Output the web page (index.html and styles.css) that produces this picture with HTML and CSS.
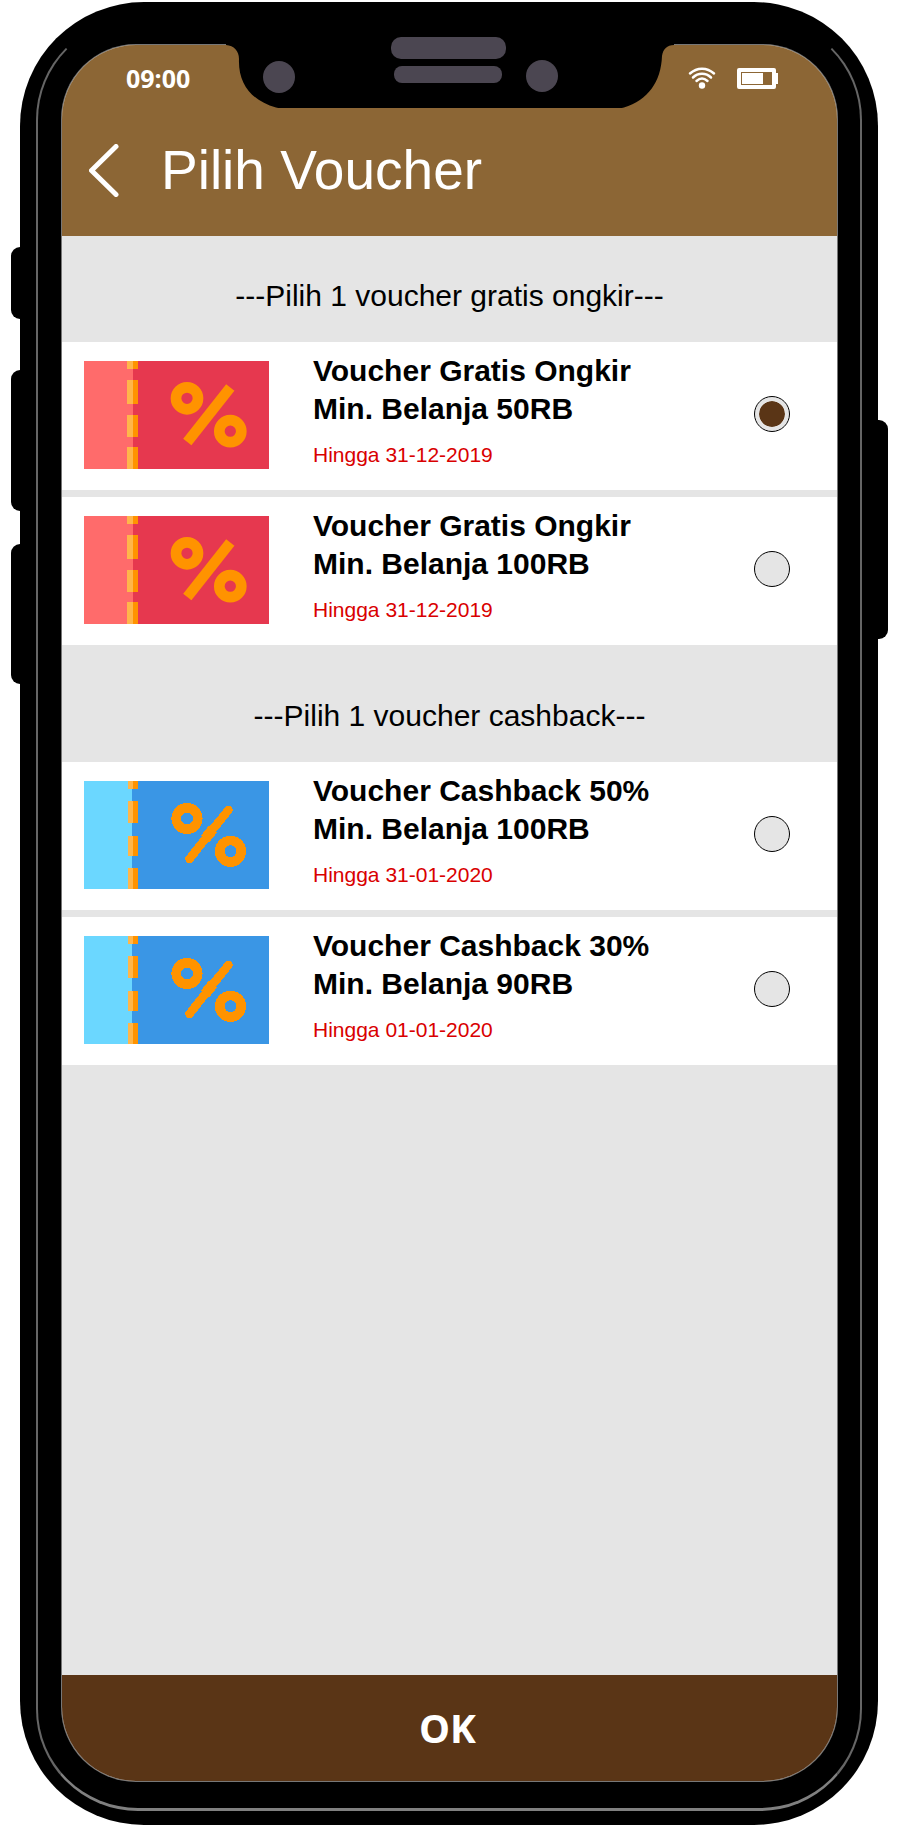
FILE: index.html
```html
<!DOCTYPE html>
<html lang="id">
<head>
<meta charset="utf-8">
<meta name="viewport" content="width=device-width, initial-scale=1">
<title>Pilih Voucher</title>
<link rel="stylesheet" href="styles.css">
</head>
<body>
<svg class="defs" aria-hidden="true">
  <symbol id="ticket-red" viewBox="0 0 185 108">
    <rect width="185" height="108" fill="#e6384f"/>
    <rect width="49" height="108" fill="#ff6b6b"/>
    <path d="M43 0h11v8H43zM43 19h11v24H43zM43 54h11v22H43zM43 86h11v22H43z" fill="#ff9300"/>
    <path d="M43 0h6v8h-6zM43 19h6v24h-6zM43 54h6v22h-6zM43 86h6v22h-6z" fill="#ffb64a"/>
    <g fill="none" stroke="#ff9300">
      <circle cx="103" cy="37.3" r="11" stroke-width="10.7"/>
      <circle cx="146.3" cy="70.2" r="11" stroke-width="10.7"/>
      <path d="M146.3 26.5L103.3 81" stroke-width="10.5"/>
    </g>
  </symbol>
  <symbol id="ticket-blue" viewBox="0 0 185 108">
    <rect width="185" height="108" fill="#3a96e5"/>
    <rect width="48" height="108" fill="#6bd7ff"/>
    <path d="M44 0h10v8H44zM44 20h10v22H44zM44 55h10v20H44zM44 87h10v21H44z" fill="#ff9300"/>
    <path d="M44 0h5v8h-5zM44 20h5v22h-5zM44 55h5v20h-5zM44 87h5v21h-5z" fill="#ffb64a"/>
    <g fill="none" stroke="#ff9300" shape-rendering="crispEdges">
      <circle cx="103" cy="37.5" r="10.8" stroke-width="9.6"/>
      <circle cx="146.5" cy="70.3" r="10.8" stroke-width="9.6"/>
      <path d="M144.500 29L125 53L105.500 78" stroke-width="8.500" stroke-linecap="round"/>
      <path d="M129 48L121 58" stroke-width="10.500"/>
      <path d="M101.500 76L108 81" stroke-width="3"/>
    </g>
  </symbol>
</svg>

<div class="device">
  <span class="key key-mute"></span>
  <span class="key key-up"></span>
  <span class="key key-down"></span>
  <span class="key key-power"></span>

  <main class="screen">
    <svg class="notch" viewBox="0 0 448 71" aria-hidden="true">
      <path d="M0 7V8C8 8.500 13 14 13 22C12 47 26 64 50 70.500Q52 71 55 71H393Q396 71 398 70.500C422 63 435 45 436 19C437 12 441 8 448 8V7Z" fill="#000"/>
      <g fill="#4b4651">
        <rect x="165" y="0" width="115" height="22" rx="10"/>
        <rect x="168" y="29" width="108" height="17" rx="8"/>
        <circle cx="53" cy="40" r="16"/>
        <circle cx="316" cy="39" r="16"/>
      </g>
    </svg>

    <header class="header">
      <div class="status">
        <time class="clock">09:00</time>
        <svg class="wifi" viewBox="0 0 28 22" aria-label="Wi-Fi" role="img">
          <g fill="none" stroke="#fff" stroke-width="2.500" stroke-linecap="round">
            <path d="M2 6.500C9 0 19 0 26 6.500"/>
            <path d="M5 10.500C10 5.500 18 5.500 23 10.500"/>
            <path d="M8.500 14C12 10.800 16 10.800 19.500 14"/>
          </g>
          <circle cx="14" cy="18.500" r="3.200" fill="#fff"/>
        </svg>
        <svg class="battery" viewBox="0 0 41 21" aria-label="Baterai" role="img">
          <path d="M2 2H37V19H2Z" fill="none" stroke="#fff" stroke-width="4" stroke-linejoin="round"/>
          <path d="M5 5H26V16H5ZM37 5H41V16H37Z" fill="#fff"/>
        </svg>
      </div>
      <div class="titlebar">
        <a class="back" href="#" aria-label="Kembali">
          <svg viewBox="0 0 30 53" aria-hidden="true"><path d="M27 2.500L2.500 26.500L27 50.500" fill="none" stroke="#fff" stroke-width="5" stroke-linecap="round" stroke-linejoin="round"/></svg>
        </a>
        <h1 class="title">Pilih Voucher</h1>
      </div>
    </header>

    <form class="content">
      <h2 class="group-title">---Pilih 1 voucher gratis ongkir---</h2>
      <div class="group">
        <label class="card">
          <svg class="ticket" aria-hidden="true"><use href="#ticket-red"/></svg>
          <span class="details">
            <strong class="name">Voucher Gratis Ongkir<br>Min. Belanja 50RB</strong>
            <span class="expiry">Hingga 31-12-2019</span>
          </span>
          <input class="radio" type="radio" name="ongkir" checked>
        </label>
        <label class="card">
          <svg class="ticket" aria-hidden="true"><use href="#ticket-red"/></svg>
          <span class="details">
            <strong class="name">Voucher Gratis Ongkir<br>Min. Belanja 100RB</strong>
            <span class="expiry">Hingga 31-12-2019</span>
          </span>
          <input class="radio" type="radio" name="ongkir">
        </label>
      </div>

      <h2 class="group-title group-title-next">---Pilih 1 voucher cashback---</h2>
      <div class="group">
        <label class="card">
          <svg class="ticket" aria-hidden="true"><use href="#ticket-blue"/></svg>
          <span class="details">
            <strong class="name">Voucher Cashback 50%<br>Min. Belanja 100RB</strong>
            <span class="expiry">Hingga 31-01-2020</span>
          </span>
          <input class="radio" type="radio" name="cashback">
        </label>
        <label class="card">
          <svg class="ticket" aria-hidden="true"><use href="#ticket-blue"/></svg>
          <span class="details">
            <strong class="name">Voucher Cashback 30%<br>Min. Belanja 90RB</strong>
            <span class="expiry">Hingga 01-01-2020</span>
          </span>
          <input class="radio" type="radio" name="cashback">
        </label>
      </div>
      <button class="ok" type="button">OK</button>
    </form>
  </main>
</div>
</body>
</html>
```
FILE: styles.css
```css
* {
  box-sizing: border-box;
}

body {
  margin: 0;
  min-height: 100vh;
  display: flex;
  background: #fff;
  color: #000;
  font-family: "Liberation Sans", Arial, sans-serif;
}

.defs {
  position: absolute;
  width: 0;
  height: 0;
}

/* Phone shell */
.device {
  position: relative;
  flex: 1;
  display: flex;
  margin: 2px 20px 0;
  padding: 43px 41px 44px 42px;
  border-radius: 124px;
  background: #000;
}

.device::before {
  content: "";
  position: absolute;
  inset: 16px 16px 14px;
  border: 2px solid #666;
  border-top-color: #000;
  border-bottom: 3px solid #808080;
  border-radius: 102px;
}

.key {
  position: absolute;
  left: -9px;
  width: 20px;
  border-radius: 9px;
  background: #000;
}

.key-mute {
  top: 245px;
  height: 72px;
}

.key-up {
  top: 368px;
  height: 141px;
}

.key-down {
  top: 542px;
  height: 140px;
}

.key-power {
  top: 418px;
  left: auto;
  right: -10px;
  height: 219px;
}

.screen {
  position: relative;
  flex: 1;
  display: flex;
  flex-direction: column;
  border-radius: 74px;
  background: #e5e5e5;
  box-shadow: 0 0 0 1px #777;
}

.notch {
  position: absolute;
  top: -8px;
  left: 50%;
  width: 448px;
  height: 71px;
  transform: translateX(-50%);
}

/* Header */
.header {
  padding: 20px 16px 34px 27px;
  border-radius: 74px 74px 0 0;
  background: #8c6635;
  color: #fff;
}

.status {
  display: flex;
  align-items: center;
  height: 26px;
  padding: 0 43px 0 37px;
}

.clock {
  margin-right: auto;
  font: bold 25px/26px "Open Sans", sans-serif;
}

.wifi {
  width: 28px;
  height: 22px;
}

.battery {
  width: 41px;
  height: 21px;
  margin-left: 21px;
}

.titlebar {
  display: flex;
  align-items: center;
  gap: 42px;
  margin-top: 48px;
}

.back {
  display: flex;
}

.back svg {
  width: 30px;
  height: 53px;
}

.title {
  margin: 0;
  font-size: 55px;
  font-weight: normal;
  line-height: 63px;
}

/* Voucher groups */
.content {
  flex: 1;
  display: flex;
  flex-direction: column;
}

.group-title {
  margin: 0;
  padding: 43px 20px 29px;
  font-size: 30px;
  font-weight: normal;
  line-height: 34px;
  text-align: center;
}

.group-title-next {
  padding-top: 54px;
}

.group {
  display: grid;
  gap: 7px;
}

.card {
  display: flex;
  align-items: center;
  gap: 44px;
  padding: 0 47px 2px 22px;
  background: #fff;
}

.ticket {
  width: 185px;
  height: 108px;
}

.details {
  flex: 1;
  display: grid;
  gap: 15px;
  padding: 10px 0 21px;
}

.name {
  font-size: 30px;
  line-height: 38px;
}

.expiry {
  color: #d90000;
  font-size: 21px;
  line-height: 24px;
}

.radio {
  appearance: none;
  width: 36px;
  height: 36px;
  margin: 0 0 2px;
  border: 1px solid #000;
  border-radius: 50%;
  background: #e5e5e5;
}

.radio:checked {
  padding: 4px;
  background: #5a3516 content-box;
  box-shadow: inset 0 0 0 4px #e5e5e5;
}

.ok {
  margin-top: auto;
  padding: 26px 4px 27px 0;
  border: 0;
  border-radius: 0 0 74px 74px;
  background: #5a3516;
  color: #fff;
  font: bold 39px/53px "Open Sans", sans-serif;
}
```
